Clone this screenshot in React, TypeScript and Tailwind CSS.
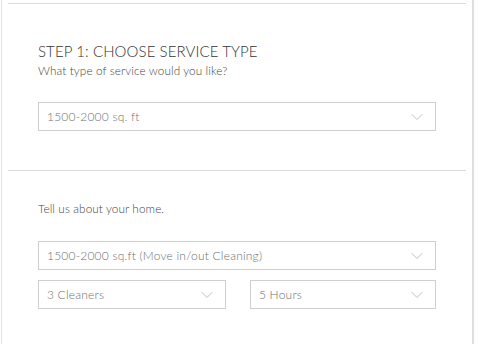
import { ChevronDown } from 'lucide-react';

function Select({ value, className = '' }: { value: string; className?: string }) {
  return (
    <div
      className={`h-[29px] border border-[#cfcfcf] bg-white flex items-center justify-between pl-[8px] pr-[8px] ${className}`}
    >
      <span className="text-[12px] font-light text-[#6f6f6f] tracking-[0.2px]">{value}</span>
      <ChevronDown className="w-[20px] h-[20px] text-[#b5b5b5]" strokeWidth={1} />
    </div>
  );
}

export default function App() {
  return (
    <div
      className="w-[478px] h-[344px] bg-white overflow-hidden"
      style={{ fontFamily: 'Lato, "Open Sans", sans-serif' }}
    >
      <div className="ml-[1px] w-[473px] h-full border-l border-[#e3e3e3] border-r-2 border-r-[#dedede] pt-[3px] px-[6px]">
        <div className="border-t border-[#dcdcdc] px-[30px] pt-[37px] pb-[39px]">
          <h2 className="text-[15px] font-light text-[#333] leading-[20px] tracking-[0.1px]">
            STEP 1: CHOOSE SERVICE TYPE
          </h2>
          <p className="text-[11.75px] font-light text-[#444] leading-[16px] mt-[2px] tracking-[0.1px]">
            What type of service would you like?
          </p>
          <Select value="1500-2000 sq. ft" className="mt-[23px]" />
        </div>
        <div className="border-t border-[#dcdcdc] px-[30px] pt-[30px]">
          <p className="text-[11.75px] font-light text-[#444] leading-[16px] tracking-[0.1px]">
            Tell us about your home.
          </p>
          <Select value="1500-2000 sq.ft (Move in/out Cleaning)" className="mt-[24px]" />
          <div className="flex gap-[24px] mt-[10px]">
            <Select value="3 Cleaners" className="w-[188px]" />
            <Select value="5 Hours" className="flex-1" />
          </div>
        </div>
      </div>
    </div>
  );
}
